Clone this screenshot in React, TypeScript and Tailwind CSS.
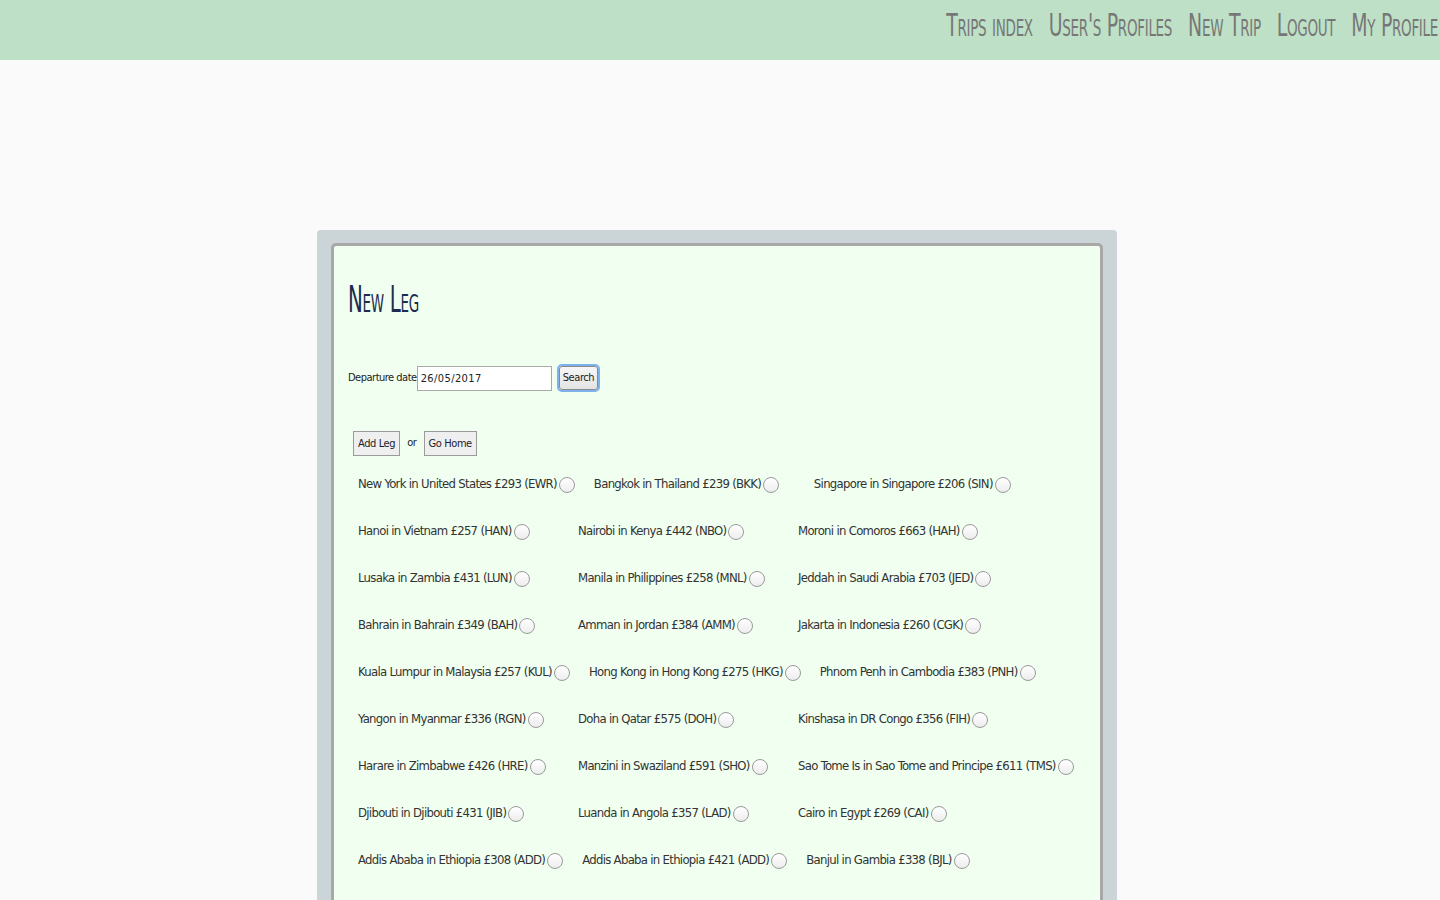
import { ReactNode } from "react";

const navLinks = ["Trips index", "User's Profiles", "New Trip", "Logout", "My Profile"];

const destinations: string[][] = [
  ["New York in United States £293 (EWR)", "Bangkok in Thailand £239 (BKK)", "Singapore in Singapore £206 (SIN)"],
  ["Hanoi in Vietnam £257 (HAN)", "Nairobi in Kenya £442 (NBO)", "Moroni in Comoros £663 (HAH)"],
  ["Lusaka in Zambia £431 (LUN)", "Manila in Philippines £258 (MNL)", "Jeddah in Saudi Arabia £703 (JED)"],
  ["Bahrain in Bahrain £349 (BAH)", "Amman in Jordan £384 (AMM)", "Jakarta in Indonesia £260 (CGK)"],
  ["Kuala Lumpur in Malaysia £257 (KUL)", "Hong Kong in Hong Kong £275 (HKG)", "Phnom Penh in Cambodia £383 (PNH)"],
  ["Yangon in Myanmar £336 (RGN)", "Doha in Qatar £575 (DOH)", "Kinshasa in DR Congo £356 (FIH)"],
  ["Harare in Zimbabwe £426 (HRE)", "Manzini in Swaziland £591 (SHO)", "Sao Tome Is in Sao Tome and Principe £611 (TMS)"],
  ["Djibouti in Djibouti £431 (JIB)", "Luanda in Angola £357 (LAD)", "Cairo in Egypt £269 (CAI)"],
  ["Addis Ababa in Ethiopia £308 (ADD)", "Addis Ababa in Ethiopia £421 (ADD)", "Banjul in Gambia £338 (BJL)"],
  ["Lilongwe in Malawi and Blantyre £412 (LLW)"]
];

const SmallButton = ({ children }: { children: ReactNode }) => (
  <button
    type="button"
    className="h-[25px] border border-[#9b9b9b] bg-[#efefef] px-[4px] text-[11px] leading-none tracking-[-0.4px] text-[#1c1c2a]"
  >
    {children}
  </button>
);

const Destination = ({ label }: { label: string }) => (
  <label className="flex h-[47px] min-w-[220px] items-center pl-[10px] pr-[9px] text-[13px] tracking-[-0.7px] text-[#333]">
    <span className="whitespace-nowrap">{label}</span>
    <input
      type="radio"
      name="destination"
      className="ml-[2px] mt-[2px] h-4 w-4 shrink-0 appearance-none rounded-full border border-[#9a9a9a] bg-gradient-to-b from-white to-[#ededed]"
    />
  </label>
);

export default function App() {
  return (
    <div className="min-h-screen overflow-hidden bg-[#fbfafb] font-['DejaVu_Sans_Condensed','Liberation_Sans_Narrow',sans-serif]">
      <header className="flex h-[60px] items-center justify-end gap-4 overflow-hidden bg-[#bee0c6] pb-[8px] pr-[2px]">
        {navLinks.map((link) => (
          <a
            key={link}
            href="#"
            className="inline-block scale-y-[1.5] whitespace-nowrap text-[21px] leading-none tracking-[-0.3px] text-[#777] [font-variant:small-caps]"
          >
            {link}
          </a>
        ))}
      </header>

      <main className="flex justify-center pr-[6px] pt-[170px]">
        <div className="w-[800px] rounded-t-[4px] bg-[#cbd5d8] px-[14px] pt-[13px]">
          <div className="h-[700px] rounded-[5px] border-[3px] border-[#a8a8a8] bg-[#f0fff0] pl-[14px] pt-[34px]">
            <h1 className="h-[40px] leading-[40px]">
              <span className="inline-block scale-y-[1.7] text-[22px] tracking-[-0.3px] text-[#1c2b4f] [font-variant:small-caps]">
                New Leg
              </span>
            </h1>

            <form className="mt-[44px] flex h-[28px] items-center text-[11px] tracking-[-0.5px] text-[#222]">
              <span>Departure date</span>
              <input
                type="text"
                defaultValue="26/05/2017"
                className="h-[25px] w-[135px] border border-[#aaa] bg-white px-[3px] text-[11px] tracking-[0.4px] text-[#222] outline-none"
              />
              <button
                type="button"
                className="ml-[7px] h-[24px] rounded-[3px] border border-[#8a8a8a] bg-gradient-to-b from-[#f6f6f6] to-[#e4e4e4] px-[3px] text-[11px] tracking-[-0.4px] ring-2 ring-[#7fb1ec]"
              >
                Search
              </button>
            </form>

            <div className="mt-[39px] flex items-center pl-[5px] text-[11px] tracking-[-0.4px] text-[#222]">
              <SmallButton>Add Leg</SmallButton>
              <span className="mx-[7px]">or</span>
              <SmallButton>Go Home</SmallButton>
            </div>

            <div className="mt-[4px]">
              {destinations.map((row, i) => (
                <div key={i} className="flex">
                  {row.map((label, j) => (
                    <Destination key={`${i}-${j}`} label={label} />
                  ))}
                </div>
              ))}
            </div>
          </div>
        </div>
      </main>
    </div>
  );
}
